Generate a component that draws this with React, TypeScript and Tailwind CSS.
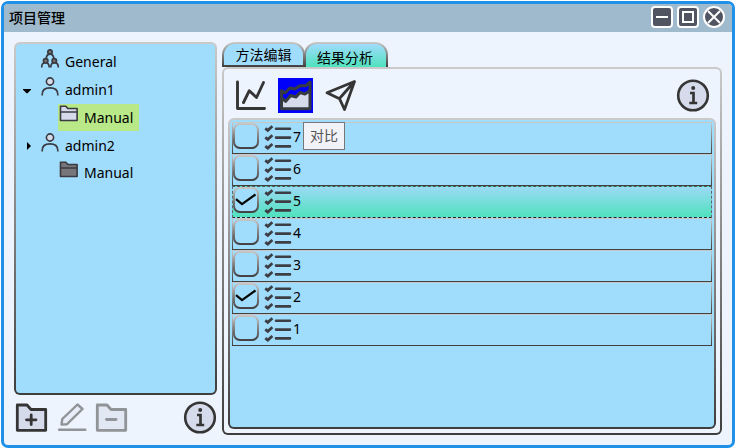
import React from "react";

const EDGE =
  "border-2 border-transparent [background:linear-gradient(#a0dcfc,#a0dcfc)_padding-box,linear-gradient(#cacaca,#3e3e3e)_border-box]";

function Person() {
  return (
    <svg width="18" height="20" viewBox="0 0 18 20" fill="none" stroke="#3a3a40" strokeWidth="1.600">
      <circle cx="9" cy="4.500" r="3.600" fill="#d6daea" />
      <path d="M1.200 18.600v-1.200C1.200 13.600 4 10.900 9 10.900s7.800 2.700 7.800 6.500v1.200" />
    </svg>
  );
}

function Group() {
  return (
    <svg width="20" height="20" viewBox="0 0 20 20" fill="#777" stroke="#3a3a40" strokeWidth="1.700">
      <path fill="none" d="M6.200 9.500C6.500 6.500 8 5.200 10 5.200s3.500 1.300 3.800 4.300M1.700 18.500c0-3.500 1.300-4.800 3.700-4.800s3.800 1.300 3.800 4.800M10.800 18.500c0-3.500 1.300-4.800 3.800-4.800s3.700 1.300 3.700 4.800" />
      <circle cx="10" cy="3" r="2.200" />
      <circle cx="5.700" cy="11.800" r="2.200" />
      <circle cx="14.300" cy="11.800" r="2.200" />
    </svg>
  );
}

function Folder({ fill }: { fill: string }) {
  return (
    <svg width="20" height="17" viewBox="0 0 20 17" fill={fill} stroke="#3a3a40" strokeWidth="1.600" strokeLinejoin="round">
      <path d="M1.500 1.200h5.300l2 2.300h9.300v12H1.500z" />
      <path d="M1.500 7h16.600" />
    </svg>
  );
}

function Info() {
  return (
    <svg width="34" height="34" viewBox="0 0 34 34" fill="none" stroke="#353535">
      <circle cx="17" cy="16.500" r="14.800" fill="#d6dbeb" strokeWidth="2.600" />
      <path d="M14 14h3.500v9.500M13.300 24h7.900" strokeWidth="2.700" />
      <circle cx="17.200" cy="8.900" r="2" fill="#353535" stroke="none" />
    </svg>
  );
}

function FolderAction({ plus = false, faded = false }: { plus?: boolean; faded?: boolean }) {
  return (
    <svg className={faded ? "opacity-50" : ""} width="34" height="30" viewBox="0 0 34 30" fill="#d6dbeb" stroke="#353535" strokeWidth="2.800" strokeLinejoin="round">
      <path d="M3.300 2h9.700l4 4.500h14.700v20.800H3.300z" />
      <path strokeLinecap="round" d={plus ? "M12.500 16.800h9.500M17.200 12v9.500" : "M12.500 16.500h9.500"} />
    </svg>
  );
}

function Pencil() {
  return (
    <svg className="opacity-50" width="30" height="30" viewBox="0 0 30 30" fill="#e4eaf6" stroke="#353535" strokeWidth="2.400" strokeLinejoin="round" strokeLinecap="round">
      <path d="M4.500 21.500l.8-5.500L20.500 1.500l5 4.500L9.800 21.300z" />
      <path d="M2.200 26.800h26" strokeWidth="2.600" />
    </svg>
  );
}

function Checklist() {
  return (
    <svg width="28" height="28" viewBox="0 0 28 28" fill="none" stroke="#3d3e43" strokeWidth="2.600">
      <path d="M12 4.700h14M12 13.600h14M12 22.400h14" strokeLinecap="round" />
      <path d="M1.300 4.400l2.500 2L8.400 2.300M1.300 13.300l2.500 2 4.600-4.100M1.300 22.100l2.500 2L8.400 20" strokeWidth="2.800" />
    </svg>
  );
}

const rows = [
  { name: "7", checked: false },
  { name: "6", checked: false },
  { name: "5", checked: true, selected: true },
  { name: "4", checked: false },
  { name: "3", checked: false },
  { name: "2", checked: true },
  { name: "1", checked: false },
];

function Row({ name, checked, selected }: { name: string; checked: boolean; selected?: boolean }) {
  return (
    <div
      className={
        "flex h-8 items-center border " +
        (selected
          ? "border-dashed border-x-[#60686a] border-t-[#555] border-b-[#222] [background:linear-gradient(#9bdaf5,#4fe2bd)]"
          : "border-transparent [background:linear-gradient(#a0dcfc,#a0dcfc)_padding-box,linear-gradient(#cacaca,#3e3e3e)_border-box]")
      }
    >
      <span className={"mb-1 flex h-[26px] w-[26px] shrink-0 items-center justify-center rounded-[7px] " + EDGE}>
        {checked && (
          <svg width="22" height="22" viewBox="0 0 22 22" fill="none" stroke="#080808" strokeWidth="2.200">
            <path d="M1 10.200l6 5L20.500 5.500" />
          </svg>
        )}
      </span>
      <span className="ml-[5px] flex w-7 shrink-0"><Checklist /></span>
      <span className="mb-0.5 ml-px">{name}</span>
    </div>
  );
}

export default function App() {
  return (
    <div className="relative h-[448px] w-[735px] overflow-hidden bg-white pl-px pt-px font-['Noto_Sans','Noto_Sans_CJK_SC',sans-serif] text-[14px] leading-5 text-black">
      <div className="flex h-[447px] flex-col overflow-hidden rounded-[7px] border-[3px] border-[#2190e8] bg-[#eef4fd]">
        <header className="flex h-7 shrink-0 items-center justify-between bg-[#9fbacc] pl-[5px] pr-[7px]">
          <h1 className="mb-0.5 font-['Noto_Sans_CJK_SC',sans-serif] text-[14px] font-medium">项目管理</h1>
          <div className="mb-0.5 flex gap-1">
            <svg width="22" height="22" viewBox="0 0 22 22" fill="#505561" stroke="white" strokeWidth="2">
              <rect x="1" y="1" width="20" height="20" rx="3" />
              <path d="M5 11h12" />
            </svg>
            <svg width="22" height="22" viewBox="0 0 22 22" fill="#505561" stroke="white" strokeWidth="2">
              <rect x="1" y="1" width="20" height="20" rx="3" />
              <rect x="6" y="6" width="10" height="10" />
            </svg>
            <svg width="22" height="22" viewBox="0 0 22 22" fill="#505561" stroke="white" strokeWidth="2">
              <circle cx="11" cy="11" r="10" />
              <path d="M5 5l12 12M17 5L5 17" />
            </svg>
          </div>
        </header>

        <div className="flex min-h-0 flex-1 pl-[10px] pt-[10px]">
          <aside className="w-[203px] shrink-0">
            <div className={"h-[353px] rounded-[6px] pt-1 " + EDGE}>
              <div className="flex h-7 items-center pl-6">
                <span className="mb-[7px]"><Group /></span>
                <span className="ml-[5px]">General</span>
              </div>
              <div className="flex h-7 items-center pl-[7px]">
                <svg className="mt-[3px]" width="8" height="5" viewBox="0 0 8 5"><path d="M0 0h8v.8L4.500 4.300h-1L0 .8z" /></svg>
                <span className="mb-[7px] ml-[10px]"><Person /></span>
                <span className="ml-1.5">admin1</span>
              </div>
              <div className="ml-[42px] flex h-[27px] w-[81px] items-center bg-[#b8e888] pl-px">
                <span className="mb-2"><Folder fill="#d6daea" /></span>
                <span className="ml-[5px]">Manual</span>
              </div>
              <div className="mt-px flex h-7 items-center pl-[11px]">
                <svg width="4" height="8" viewBox="0 0 4 8"><path d="M0 0l4 4-4 4z" /></svg>
                <span className="mb-[7px] ml-[10px]"><Person /></span>
                <span className="ml-1.5">admin2</span>
              </div>
              <div className="-mt-px ml-[43px] flex h-[27px] items-center">
                <span className="mb-1.5"><Folder fill="#77777b" /></span>
                <span className="ml-[5px]">Manual</span>
              </div>
            </div>
            <div className="mt-[6px] flex items-center">
              <FolderAction plus />
              <span className="ml-[9px]"><Pencil /></span>
              <span className="ml-[7px]"><FolderAction faded /></span>
              <span className="ml-auto"><Info /></span>
            </div>
          </aside>

          <main className="ml-[5px] w-[500px] shrink-0">
            <div className="flex h-[25px] items-end font-['Noto_Sans_CJK_SC',sans-serif]">
              <div className={"flex h-[25px] w-[83px] items-center justify-center rounded-t-[13px] pb-0.5 " + EDGE}>方法编辑</div>
              <div className="-ml-px flex h-[25px] w-[84px] items-center justify-center rounded-t-[13px] border-2 border-b-0 border-transparent pr-0.5 pt-0.5 [background:linear-gradient(#a0dcfc,#4fe2bd)_padding-box,linear-gradient(#cacaca,#3e3e3e)_border-box]">结果分析</div>
            </div>
            <section className="h-[368px] rounded-[6px] border-2 border-transparent px-1 [background:linear-gradient(#eef4fd,#eef4fd)_padding-box,linear-gradient(#cacaca,#3e3e3e)_border-box]">
              <div className="flex h-[49px] items-center pl-[6px] pt-1">
                <svg width="34" height="34" viewBox="0 0 34 34" fill="none" stroke="#353535" strokeWidth="2.900" strokeLinecap="round" strokeLinejoin="round">
                  <path d="M3.500 3v26.500H30.500M9.500 23.500l5.800-11.800L22.500 18.500l7-15" />
                </svg>
                <span className="ml-[10px] flex h-[35px] w-[35px] bg-[#0000fa]">
                  <svg width="35" height="35" viewBox="0 0 35 35" stroke="#353b40" strokeWidth="3" strokeLinejoin="round" fill="none">
                    <path d="M3.500 20v10.800h28.500V12.500L27 16l-5-1.500L18 19l-5.300-1.500-5 5.800z" fill="#d6dbeb" />
                    <path d="M3.500 20v-7.300L7 15l5-5 5 1 5-3.300h6L32 4v9" />
                  </svg>
                </span>
                <svg className="ml-[10px]" width="34" height="34" viewBox="0 0 34 34" fill="none" stroke="#353535" strokeWidth="2.800" strokeLinejoin="round">
                  <path d="M31.500 2.500L4 13.700l12.500 6L21.500 30.500zM16.500 19.500l15-17" />
                </svg>
                <span className="ml-auto mr-[6px]"><Info /></span>
              </div>
              <div className={"h-[311px] rounded-[6px] px-0.5 pt-0.5 " + EDGE}>
                {rows.map((row) => <Row key={row.name} {...row} />)}
              </div>
            </section>
          </main>
        </div>
      </div>
      <div className="absolute left-[303px] top-[122px] flex h-[28px] w-[42px] items-center justify-center border border-[#777] bg-[#f2f3f8] pb-0.5 font-['Noto_Sans_CJK_SC',sans-serif] text-[14px] text-[#555]">对比</div>
    </div>
  );
}
